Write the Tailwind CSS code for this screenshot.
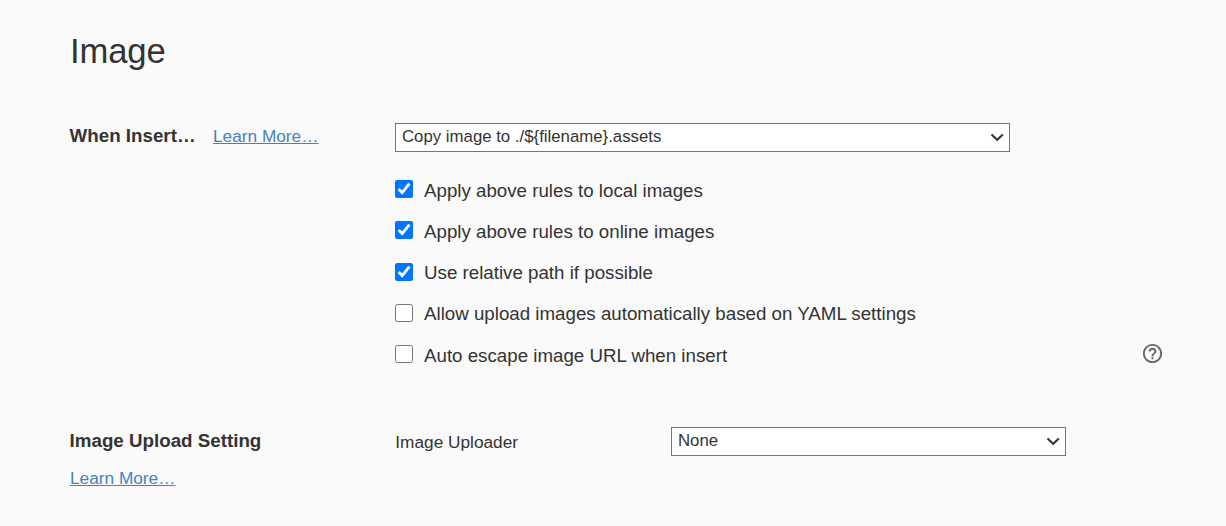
<!DOCTYPE html>
<html lang="en"><head><meta charset="utf-8"><title>Image</title>
<script src="https://cdn.jsdelivr.net/npm/@tailwindcss/browser@4"></script></head>
<body class="bg-[#fafafa] text-[#333] font-['Liberation_Sans',Arial,sans-serif] h-[526px] overflow-hidden pl-[70px] pt-[31px]">
<h1 class="text-[34.67px] leading-[40px] tracking-[-0.15px]">Image</h1>
<section class="flex mt-[52px]">
  <div class="w-[325px] shrink-0 flex items-baseline h-[29px] leading-[25px]">
    <h2 class="text-[18.75px] font-bold w-[143px] -ml-[0.4px] mr-[0.4px]">When Insert…</h2>
    <a class="text-[17.25px] text-[#4183c4] underline" href="#">Learn More…</a>
  </div>
  <div class="w-[769px]">
    <div class="w-[615px] h-[29px] border border-[#767676] bg-white flex items-center justify-between pl-[6px] pr-[5px] text-[16.8px]">
      <span class="leading-[25px] pb-[2px]">Copy image to ./${filename}.assets</span>
      <svg class="w-[14px] h-[10px] mb-[1px]" viewBox="0 0 14 10" fill="none" stroke="#333" stroke-width="2"><path d="M1.500 2.500l5.700 5.300L12.900 2.500"/></svg>
    </div>
    <div class="mt-[18px] text-[18.73px]">
      <label class="flex items-center h-[41.25px]"><input type="checkbox" checked class="w-[18px] h-[18px] mr-[11px] mb-[3.400px]"><span>Apply above rules to local images</span></label>
      <label class="flex items-center h-[41.25px]"><input type="checkbox" checked class="w-[18px] h-[18px] mr-[11px] mb-[3.400px]"><span>Apply above rules to online images</span></label>
      <label class="flex items-center h-[41.25px]"><input type="checkbox" checked class="w-[18px] h-[18px] mr-[11px] mb-[2px]"><span>Use relative path if possible</span></label>
      <label class="flex items-center h-[41.25px]"><input type="checkbox" class="w-[18px] h-[18px] mr-[11px] mb-[2px]"><span>Allow upload images automatically based on YAML settings</span></label>
      <label class="flex items-center h-[41.25px]"><input type="checkbox" class="w-[18px] h-[18px] mr-[11px] mb-[3.400px]"><span>Auto escape image URL when insert</span>
        <svg class="ml-auto w-[23px] h-[23px] mb-[4px]" viewBox="0 0 24 24" fill="#666"><path d="M11 18h2v-2h-2v2zm1-16C6.480 2 2 6.480 2 12s4.480 10 10 10 10-4.480 10-10S17.520 2 12 2zm0 18c-4.410 0-8-3.590-8-8s3.590-8 8-8 8 3.590 8 8-3.590 8-8 8zm0-14c-2.210 0-4 1.790-4 4h2c0-1.100.9-2 2-2s2 .9 2 2c0 2-3 1.750-3 5h2c0-2.250 3-2.500 3-5 0-2.210-1.790-4-4-4z"/></svg></label>
    </div>
  </div>
</section>
<section class="flex mt-[51px]">
  <div class="w-[325px] shrink-0 pt-[1px]">
    <h2 class="text-[18.75px] font-bold leading-[25px] -ml-[0.4px]">Image Upload Setting</h2>
    <a class="block mt-[13px] text-[17.25px] leading-[25px] text-[#4183c4] underline" href="#">Learn More…</a>
  </div>
  <div class="w-[276px] text-[17.25px] leading-[29px] pt-[1px] pl-[0.3px]">Image Uploader</div>
  <div class="w-[395px] h-[29px] border border-[#767676] bg-white flex items-center justify-between pl-[6px] pr-[5px] text-[16.8px]">
    <span class="leading-[25px] pb-[2px]">None</span>
    <svg class="w-[14px] h-[10px] mb-[1px]" viewBox="0 0 14 10" fill="none" stroke="#333" stroke-width="2"><path d="M1.500 2.500l5.700 5.300L12.900 2.500"/></svg>
  </div>
</section>
</body></html>
